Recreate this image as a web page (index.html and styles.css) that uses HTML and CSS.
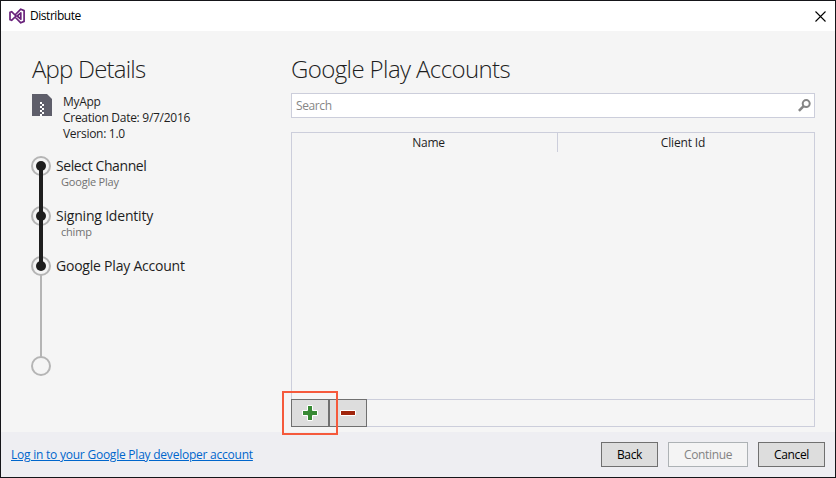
FILE: index.html
```html
<!DOCTYPE html>
<html lang="en">
<head>
<meta charset="utf-8">
<title>Distribute</title>
<link rel="stylesheet" href="styles.css">
</head>
<body>
<div class="window">
  <header class="titlebar">
    <svg class="logo" width="17" height="16" viewBox="0 0 17 16"><path fill="none" stroke="#68217a" stroke-width="1.700" stroke-linejoin="round" d="M1 4.200 2.600 3.700 7 8 2.600 12.300 1 11.800ZM11.800 4.800V11.200L8.200 8ZM6 7 11.800 1.200 15.100 2.600V13.400L11.800 14.800 6 9"/></svg>
    <span class="title">Distribute</span>
    <svg class="close" width="11" height="11" viewBox="0 0 11 11"><path d="M.5.5l10 10M10.500.5l-10 10" stroke="#000" stroke-width="1.100"/></svg>
  </header>
  <main class="content">
    <aside class="sidebar">
      <h1 class="h-app">App Details</h1>
      <div class="app">
        <svg width="20" height="22" viewBox="0 0 20 22"><path fill="#5e5e6a" d="M0 0H15L20 5V22H0Z"/><path fill="#fff" d="M8 8h2v2H8zM10 10h2v2h-2zM8 12h2v2H8zM10 14h2v2h-2zM8 16h2v2H8zM10 18h2v2h-2zM8 20h2v2H8z"/></svg>
        <div class="info">
          <div><span>MyApp</span></div>
          <div><span>Creation Date: 9/7/2016</span></div>
          <div><span>Version: 1.0</span></div>
        </div>
      </div>
      <div class="steps">
        <svg width="20" height="220" viewBox="0 0 20 220">
          <g fill="none" stroke="#b5b5b5" stroke-width="2"><circle cx="10" cy="10" r="9"/><circle cx="10" cy="60" r="9"/><circle cx="10" cy="110" r="9"/><circle cx="10" cy="210" r="9"/><path d="M10 119V201"/></g>
          <path d="M10 10V110" stroke="#1e1e1e" stroke-width="4"/>
          <g fill="#1e1e1e"><circle cx="10" cy="10" r="5"/><circle cx="10" cy="60" r="5"/><circle cx="10" cy="110" r="5"/></g>
        </svg>
        <ol>
          <li><span class="step">Select Channel</span><span class="detail">Google Play</span></li>
          <li><span class="step identity">Signing Identity</span><span class="detail">chimp</span></li>
          <li><span class="step account">Google Play Account</span></li>
        </ol>
      </div>
    </aside>
    <section class="accounts">
      <h1>Google Play Accounts</h1>
      <div class="search">
        <span>Search</span>
        <svg width="13" height="13" viewBox="0 0 13 13" fill="none" stroke="#858585"><circle cx="8.200" cy="4.600" r="3.500" stroke-width="2"/><path d="M5.600 7.200.9 11.900" stroke-width="2.600"/></svg>
      </div>
      <div class="table">
        <div class="thead"><div class="th name"><span>Name</span></div><div class="th client"><span>Client Id</span></div></div>
        <div class="rows"></div>
        <div class="tools">
          <div class="tool add"><svg width="16" height="16" viewBox="0 0 16 16"><path fill="#388a34" stroke="#fff" d="M5.500.5h5v5h5v5h-5v5h-5v-5h-5v-5h5z"/></svg><div class="highlight"></div></div>
          <div class="tool"><svg width="16" height="16" viewBox="0 0 16 16"><path fill="#a1260d" stroke="#fff" d="M.5 5.500h15v5H.5z"/></svg></div>
        </div>
      </div>
    </section>
  </main>
  <footer class="footer">
    <a class="link">Log in to your Google Play developer account</a>
    <div class="btn back"><span>Back</span></div>
    <div class="btn continue"><span>Continue</span></div>
    <div class="btn cancel"><span>Cancel</span></div>
  </footer>
</div>
</body>
</html>
```
FILE: styles.css
```css
* { box-sizing: border-box; }
body { margin: 0; font: 12px/16px "Open Sans", "Noto Sans", sans-serif; color: #1e1e1e; }
svg { display: block; flex: none; }
span, a { white-space: nowrap; }
.window { width: 836px; height: 478px; border: 1px solid #151519; background: #f5f5f5; display: flex; flex-direction: column; }
.titlebar { height: 30px; background: #fff; display: flex; align-items: center; padding: 0 9px 0 8px; color: #000; }
.title { margin-left: 4px; letter-spacing: -0.46px; }
.close { margin-left: auto; }
.content { height: 401px; display: flex; padding-left: 30px; }
.sidebar { width: 260px; }
h1 { margin: 0; font-size: 24px; line-height: 32px; font-weight: 300; white-space: nowrap; padding-top: 22px; height: 62px; letter-spacing: -0.6px; }
.h-app { padding-left: 1px; letter-spacing: -0.8px; }
.app { display: flex; height: 63px; padding-left: 1px; }
.app svg { margin-top: 1px; }
.info { margin-left: 11px; padding-top: 1px; letter-spacing: -0.28px; }
.steps { display: flex; }
ol { list-style: none; margin: 0; padding: 0 0 0 5px; }
li { height: 50px; }
.step, .detail { display: block; }
.step { font-size: 14px; line-height: 20px; letter-spacing: -0.4px; }
.identity { letter-spacing: -0.2px; }
.account { letter-spacing: -0.22px; }
.detail { font-size: 11px; line-height: 11px; padding-left: 5px; color: #717171; letter-spacing: -0.2px; }
.accounts { width: 524px; }
.search { height: 25px; border: 1px solid #cccedb; background: #fff; display: flex; align-items: center; justify-content: space-between; padding: 0 3px 0 4px; color: #868686; letter-spacing: -0.4px; }
.table { margin-top: 14px; height: 295px; border: 1px solid #cccedb; display: flex; flex-direction: column; }
.thead { display: flex; height: 19px; }
.th { flex: 1; display: flex; justify-content: center; padding-top: 2px; letter-spacing: -0.3px; }
.name { flex: 0 0 266px; padding-left: 8px; border-right: 1px solid #cccedb; letter-spacing: -0.25px; }
.client { padding-right: 6px; letter-spacing: -0.15px; }
.rows { flex: 1; border-bottom: 1px solid #cccedb; }
.tools { height: 26px; display: flex; }
.tool { width: 38px; height: 28px; margin-top: -1px; border: 1px solid #707070; background: #ddd; display: flex; align-items: center; justify-content: center; }
.add { position: relative; margin-left: -1px; }
.highlight { position: absolute; z-index: 1; left: -10px; top: -9px; width: 56px; height: 44px; border: 2px solid #f55a3c; }
.footer { height: 45px; background: #eeeef2; display: flex; align-items: center; padding: 0 10px; gap: 10px; }
.link { color: #0066cc; text-decoration: underline; margin-right: auto; padding-top: 1px; letter-spacing: -0.23px; }
.btn { height: 25px; border: 1px solid #707070; background: #ddd; color: #000; display: flex; align-items: center; justify-content: center; padding-top: 1px; letter-spacing: -0.36px; }
.back { width: 57px; }
.continue { width: 80px; border-color: #adb2b5; background: #f4f4f4; color: #838383; }
.cancel { width: 67px; }
```
